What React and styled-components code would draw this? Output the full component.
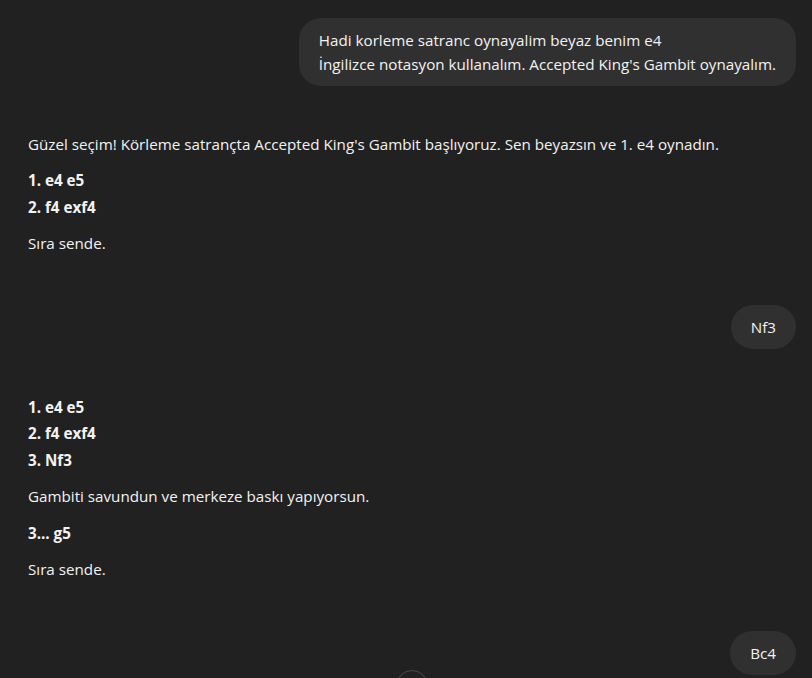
import React from "react";
import styled, { createGlobalStyle } from "styled-components";

const GlobalStyle = createGlobalStyle`
  html, body {
    margin: 0;
    padding: 0;
    background: #212121;
    color: #ececec;
    font-family: "Open Sans", "Noto Sans", "Liberation Sans", sans-serif;
    -webkit-font-smoothing: antialiased;
  }
  #root { min-height: 100vh; }
`;

const Page = styled.div`
  position: relative;
  height: 678px;
  overflow: hidden;
  background: #212121;
`;

const Thread = styled.div`
  display: flex;
  flex-direction: column;
  padding: 18px 16px 0 28px;
  font-size: 15.2px;
  line-height: 24px;
`;

const UserRow = styled.div`
  display: flex;
  justify-content: flex-end;
  margin-top: ${(p) => (p.$first ? "0" : "50px")};
`;

const Bubble = styled.div`
  background: #303030;
  color: #f3f3f3;
  border-radius: 22px;
  padding: 10px 20px;
  max-width: 70%;
`;

const BubbleLine = styled.div`
  white-space: nowrap;
`;

const Assistant = styled.div`
  display: flex;
  flex-direction: column;
  margin-top: 45.5px;
  color: #f3f3f3;
`;

const Para = styled.p`
  margin: 0;
  & + & { margin-top: 12.5px; }
`;

const MoveList = styled.div`
  display: flex;
  flex-direction: column;
  gap: 2.5px;
  margin: 12.5px 0;
  &:first-child { margin-top: 0; }
`;

const Move = styled.div`
  font-weight: 700;
`;

const ScrollButton = styled.div`
  position: absolute;
  left: 396px;
  top: 670px;
  width: 32px;
  height: 32px;
  border-radius: 50%;
  border: 1px solid #4a4a4a;
  background: #212121;
  box-sizing: border-box;
`;

export default function App() {
  return (
    <Page>
      <GlobalStyle />
      <Thread>
        <UserRow $first>
          <Bubble>
            <BubbleLine>Hadi korleme satranc oynayalim beyaz benim e4</BubbleLine>
            <BubbleLine>İngilizce notasyon kullanalım. Accepted King's Gambit oynayalım.</BubbleLine>
          </Bubble>
        </UserRow>
        <Assistant>
          <Para>Güzel seçim! Körleme satrançta Accepted King's Gambit başlıyoruz. Sen beyazsın ve 1. e4 oynadın.</Para>
          <MoveList>
            <Move>1. e4 e5</Move>
            <Move>2. f4 exf4</Move>
          </MoveList>
          <Para>Sıra sende.</Para>
        </Assistant>
        <UserRow>
          <Bubble>Nf3</Bubble>
        </UserRow>
        <Assistant>
          <MoveList>
            <Move>1. e4 e5</Move>
            <Move>2. f4 exf4</Move>
            <Move>3. Nf3</Move>
          </MoveList>
          <Para>Gambiti savundun ve merkeze baskı yapıyorsun.</Para>
          <MoveList>
            <Move>3... g5</Move>
          </MoveList>
          <Para>Sıra sende.</Para>
        </Assistant>
        <UserRow>
          <Bubble>Bc4</Bubble>
        </UserRow>
      </Thread>
      <ScrollButton />
    </Page>
  );
}
